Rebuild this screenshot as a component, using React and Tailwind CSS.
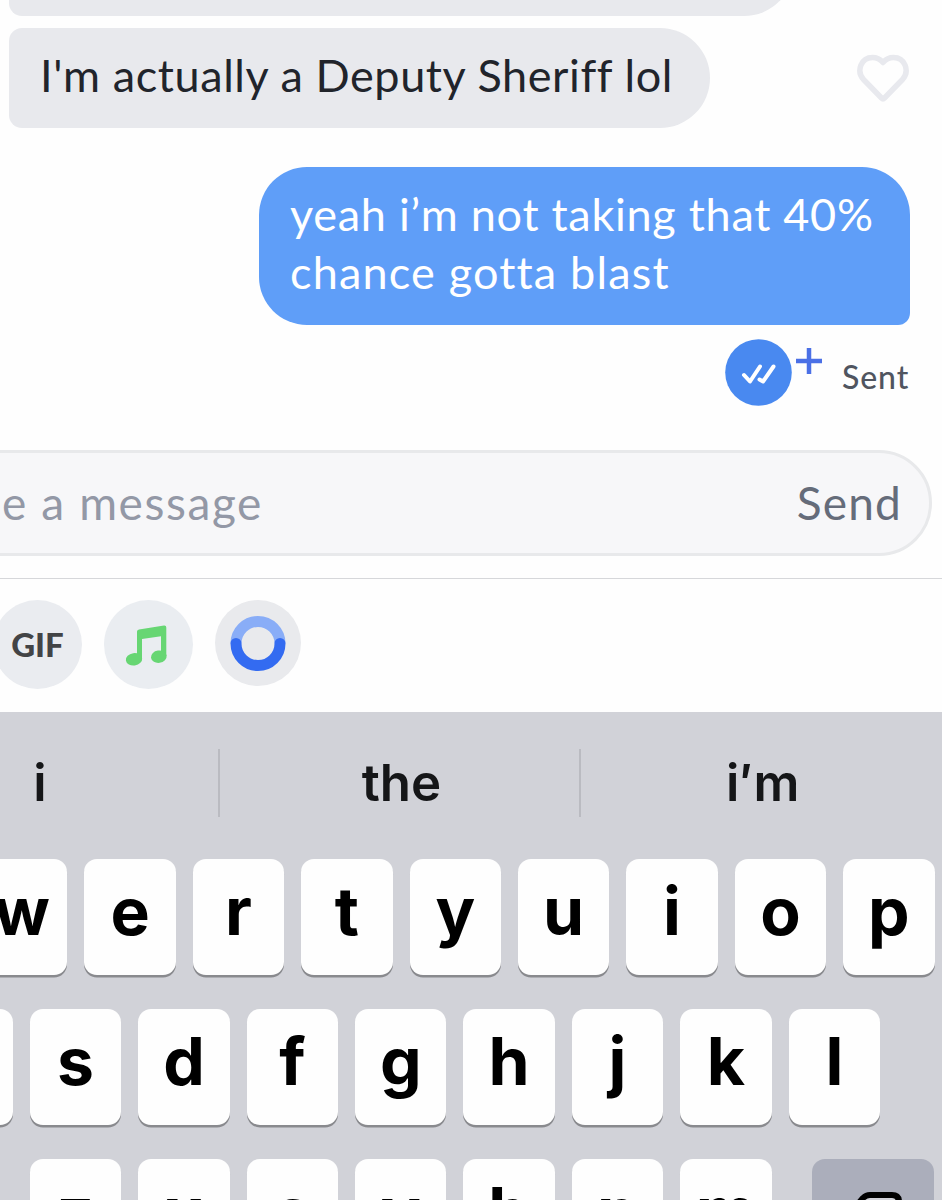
const SUGGESTIONS = [
  { word: 'i', box: 'w-[360px] -ml-[140px] pl-[2px]' },
  { word: 'the', box: 'w-[361px] pl-1' },
  { word: 'i′m', box: 'w-[364px] tracking-[0.6px]' },
]

function Key({ letter }) {
  return (
    <div className="flex h-[116px] w-[91.4px] shrink-0 justify-center rounded-[13px] bg-[#fefefe] font-bold text-black shadow-[0_2.5px_0_#898a8e]">
      <span className="text-[66px] leading-[105px]">{letter}</span>
    </div>
  )
}

function KeyRow({ letters, className, children }) {
  return (
    <div className={`flex gap-[17px] ${className}`}>
      {letters.split('').map(letter => (
        <Key key={letter} letter={letter} />
      ))}
      {children}
    </div>
  )
}

function Messages() {
  return (
    <div className="flex h-[450px] flex-col">
      <div className="-mt-[84px] ml-[9px] h-[100px] w-[785px] shrink-0 rounded-l-[13px] rounded-r-[50px] bg-[#e8e9ed]" />

      <div className="mt-3 flex items-center justify-between pl-[9px] pr-[32px]">
        <div className="h-[100px] w-[701px] rounded-l-[13px] rounded-r-[50px] bg-[#e8e9ed] pl-[31px] text-[45px] leading-[95px] tracking-[0.6px] whitespace-nowrap text-[#21242b]">
          I'm actually a Deputy Sheriff lol
        </div>
        <svg className="mt-0.5 h-[50px] w-[54px]" viewBox="0 0 54 50" fill="none">
          <path
            d="M27 8.500C23.500 4.500 20 3.500 16.500 3.500C5 3.500 0 17 7.500 25.500L25.500 44Q27 45.500 28.500 44L46.500 25.500C54 17 49 3.500 37.500 3.500C34 3.500 30.500 4.500 27 8.500Z"
            stroke="#e8e9ee"
            strokeWidth="5.500"
            strokeLinejoin="round"
          />
        </svg>
      </div>

      <div className="mt-[39px] ml-[259px] h-[158px] w-[651px] rounded-[48px] rounded-br-[12px] bg-[#5f9ef8] pt-[17.6px] pl-[31px] text-[45px] leading-[58.5px] whitespace-nowrap text-white">
        <div className="tracking-[0.72px]">yeah i’m not taking that 40%</div>
        <div className="tracking-[1.18px]">chance gotta blast</div>
      </div>

      <div className="mt-[14px] flex h-[67px] pl-[725px]">
        <svg className="size-[67px]" viewBox="0 0 67 67" fill="none">
          <circle cx="33.500" cy="33.500" r="33.300" fill="#4989f0" />
          <path
            d="M19 36L25 42.500L35 27.500M34.500 40.500L38 42.500L48.500 27.500"
            stroke="#fff"
            strokeWidth="4"
            strokeLinecap="round"
            strokeLinejoin="round"
          />
        </svg>
        <svg className="mt-[9px] ml-[3.5px] size-[26px]" viewBox="0 0 26 26">
          <path d="M13 0V26M0 13H26" stroke="#4b70e6" strokeWidth="4.500" />
        </svg>
        <span className="ml-[20.5px] text-[32px] leading-[75px] font-medium tracking-[0.9px] text-[#505560]">Sent</span>
      </div>
    </div>
  )
}

function Composer() {
  return (
    <div className="h-[129px] border-b border-[#d6d7da]">
      <div className="-ml-[60px] flex h-[106px] w-[992px] items-center justify-between rounded-[53px] border-[3px] border-[#e8e9eb] bg-[#f7f7f9] pr-[27px] pb-[2px]">
        <span className="flex w-[320px] justify-end text-[46px] tracking-[1.6px] whitespace-nowrap text-[#9398a6]">
          Type a message
        </span>
        <span className="text-[46px] tracking-[1.2px] text-[#656c7a]">Send</span>
      </div>
    </div>
  )
}

function Attachments() {
  return (
    <div className="-ml-[7px] flex h-[133px] gap-[22px] pt-[21px]">
      <div className="flex size-[89px] items-center justify-center rounded-full bg-[#eaecf0] text-[33px] font-black text-[#434446]">
        GIF
      </div>
      <div className="size-[89px] rounded-full bg-[#eaedf1]">
        <svg className="size-[89px]" viewBox="0 0 89 89" fill="#67d673">
          <path d="M33 59V31.500Q33 29.700 35 29.400L60 25.600Q62.300 25.400 62.300 27.500V56H57V36.200L38 39V59Z" />
          <ellipse cx="30" cy="59.300" rx="8.200" ry="6.200" transform="rotate(-8 30 59.300)" />
          <ellipse cx="54.800" cy="56.700" rx="7.900" ry="6.200" transform="rotate(-8 54.800 56.700)" />
        </svg>
      </div>
      <div className="size-[86px] rounded-full bg-[#e9eaed]">
        <svg className="size-[86px]" viewBox="0 0 86 86" fill="none" strokeWidth="11">
          <path d="M21 43.500A22 22 0 0 1 65 43.500" stroke="#89adf7" />
          <path d="M21 43.500A22 22 0 0 0 65 43.500" stroke="#336bf1" strokeLinecap="round" />
        </svg>
      </div>
    </div>
  )
}

function Keyboard() {
  return (
    <div className="h-[488px] bg-[#d1d2d8] font-[Inter,sans-serif]">
      <div className="flex h-[147px] items-start pt-[37px]">
        {SUGGESTIONS.map(({ word, box }) => (
          <div
            key={word}
            className={`${box} h-[68px] shrink-0 text-center text-[51px] leading-[68px] font-semibold text-[#151618] not-last:border-r-2 not-last:border-[#babbc1]`}
          >
            {word}
          </div>
        ))}
      </div>
      <KeyRow letters="wertyuiop" className="-ml-[24px]" />
      <KeyRow letters="asdfghjkl" className="mt-[34px] -ml-[78.5px]" />
      <KeyRow letters="zxcvbnm" className="mt-[34px] pl-[29.8px]">
        <div className="ml-[23px] flex h-[116px] w-[122px] shrink-0 justify-center rounded-[13px] bg-[#abaebb] pt-[30px] pl-[17px]">
          <svg className="h-[54px] w-[66px]" viewBox="0 0 66 54" fill="none" stroke="#000" strokeWidth="6" strokeLinejoin="round">
            <path d="M22 6H44Q51 6 51 13V39Q51 46 44 46H22Q18 46 15 43L3 29Q1 26 3 23L15 9Q18 6 22 6Z" fill="#d1d2d8" />
            <path d="M25 18L39 34M39 18L25 34" strokeLinecap="round" />
          </svg>
        </div>
      </KeyRow>
    </div>
  )
}

export default function App() {
  return (
    <div className="h-[1200px] w-[942px] overflow-hidden bg-[#fefefe] font-[Lato,sans-serif]">
      <Messages />
      <Composer />
      <Attachments />
      <Keyboard />
    </div>
  )
}
